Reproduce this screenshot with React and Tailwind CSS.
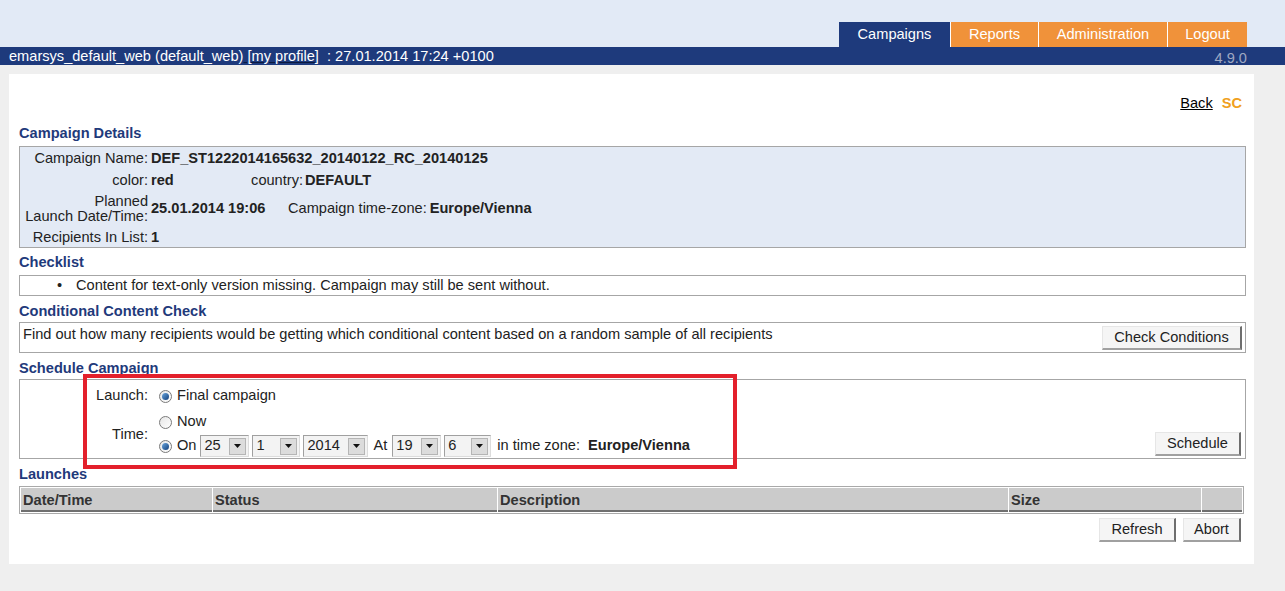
import React from "react";

const font = "font-['Liberation_Sans',Arial,Helvetica,sans-serif]";

const Radio = ({ checked }) => (
  <span className="flex h-[13px] w-[13px] items-center justify-center rounded-full border border-[#7a7a7a] bg-gradient-to-br from-[#e6e6e6] to-[#ffffff]">
    {checked && (
      <span className="h-[7px] w-[7px] rounded-full bg-gradient-to-br from-[#6aa7e0] to-[#123f7a]"></span>
    )}
  </span>
);

const Select = ({ value, width }) => (
  <div
    className={`flex h-[22px] items-center justify-between border border-[#a0a0a0] border-b-[#dcdcdc] border-r-[#dcdcdc] bg-[#f3f3f3] pl-[3px] pr-[2px] ${width}`}
  >
    <span>{value}</span>
    <span className="flex h-[17px] w-[17px] items-center justify-center border border-[#b5b5b5] bg-[#dcdcdc]">
      <svg width="7" height="4" viewBox="0 0 7 4">
        <path d="M0 0h7L3.5 4z" fill="#111" />
      </svg>
    </span>
  </div>
);

const Button = ({ children, className = "" }) => (
  <button
    className={`flex h-[24px] items-center justify-center border-l border-t border-l-[#e6e6e6] border-t-[#e6e6e6] border-r-2 border-b-2 border-r-[#6e6e6e] border-b-[#a0a0a0] bg-[#f5f5f5] pt-[1px] text-[14.6px] text-[#222] ${className}`}
  >
    {children}
  </button>
);

const Heading = ({ children, className = "" }) => (
  <div className={`h-[18px] text-[14.6px] font-bold leading-[18px] text-[#1f3a7b] ${className}`}>
    {children}
  </div>
);

export default function App() {
  return (
    <div className={`relative min-h-[591px] w-full bg-[#efefef] text-[14.6px] text-[#222] ${font}`}>
      {/* Top band with tabs */}
      <div className="flex h-[47px] items-end justify-end bg-[#e2eaf6] pr-[38px]">
        <div className="flex h-[25px] text-[14.6px] text-white">
          <div className="flex w-[111px] items-center justify-center bg-[#1e3a7c]">Campaigns</div>
          <div className="flex w-[88px] items-center justify-center border-l border-white bg-[#f0923a]">Reports</div>
          <div className="flex w-[129px] items-center justify-center border-l border-white bg-[#f0923a]">Administration</div>
          <div className="flex w-[80px] items-center justify-center border-l border-white bg-[#f0923a]">Logout</div>
        </div>
      </div>
      {/* Status bar */}
      <div className="flex h-[18px] items-center justify-between bg-[#1e3a7c] pl-[9px] pr-[38px] text-[14.6px] leading-[18px] text-white">
        <span className="whitespace-pre">
          emarsys_default_web (default_web)
          <span className="underline decoration-[#0b1a40]"> [my profile]</span>
          {"  : 27.01.2014 17:24 +0100"}
        </span>
        <span className="pt-[3px] text-[#9ea8c2]">4.9.0</span>
      </div>

      {/* Main panel */}
      <div className="ml-[9px] mt-[9px] w-[1245px] bg-white pb-[22px] pl-[10px] pr-[8px] pt-[20px]">
        <div className="flex h-[18px] items-center justify-end gap-[9px] pr-[4px] leading-[18px]">
          <span className="text-black underline">Back</span>
          <span className="font-bold text-[#f0a020]">SC</span>
        </div>

        <Heading className="mt-[12px]">Campaign Details</Heading>
        <div className="mt-[4px] h-[102px] border border-[#a6a6a6] bg-[#e3eaf5] pt-[1px]">
          <div className="flex h-[22px] items-center">
            <span className="w-[128px] text-right">Campaign Name:</span>
            <span className="ml-[3px] font-bold">DEF_ST1222014165632_20140122_RC_20140125</span>
          </div>
          <div className="flex h-[21px] items-center">
            <span className="w-[128px] text-right">color:</span>
            <span className="ml-[3px] w-[99px] font-bold">red</span>
            <span className="w-[53px] text-right">country:</span>
            <span className="ml-[2px] font-bold">DEFAULT</span>
          </div>
          <div className="flex h-[36px] items-center">
            <span className="w-[128px] text-right leading-[15px]">
              Planned
              <br />
              Launch Date/Time:
            </span>
            <span className="ml-[3px] w-[137px] font-bold">25.01.2014 19:06</span>
            <span>Campaign time-zone:</span>
            <span className="ml-[3px] font-bold">Europe/Vienna</span>
          </div>
          <div className="flex h-[21px] items-center">
            <span className="w-[128px] text-right">Recipients In List:</span>
            <span className="ml-[3px] font-bold">1</span>
          </div>
        </div>

        <Heading className="mt-[5px]">Checklist</Heading>
        <div className="mt-[4px] flex h-[21px] items-center border border-[#a6a6a6] pl-[37px] pt-[1px]">
          <span className="w-[19px]">•</span>
          <span>Content for text-only version missing. Campaign may still be sent without.</span>
        </div>

        <Heading className="mt-[6px]">Conditional Content Check</Heading>
        <div className="mt-[2px] flex h-[31px] items-start justify-between border border-[#a6a6a6] pl-[3px] pr-[3px]">
          <span className="mt-[2px] leading-[18px]">
            Find out how many recipients would be getting which conditional content based on a random sample of all recipients
          </span>
          <Button className="mt-[3px] w-[140px]">Check Conditions</Button>
        </div>

        <Heading className="mt-[6px]">Schedule Campaign</Heading>
        <div className="mt-[2px] flex h-[80px] items-end justify-between border border-[#a6a6a6] pb-[1px] pr-[4px]">
          <div className="flex h-full flex-col pt-[6px]">
            <div className="flex h-[20px] items-center">
              <span className="w-[128px] text-right">Launch:</span>
              <span className="ml-[11px]">
                <Radio checked />
              </span>
              <span className="ml-[5px]">Final campaign</span>
            </div>
            <div className="mt-[6px] flex items-center">
              <span className="w-[128px] text-right">Time:</span>
              <div className="ml-[11px] flex flex-col">
                <div className="flex h-[20px] items-center">
                  <Radio />
                  <span className="ml-[5px]">Now</span>
                </div>
                <div className="mt-[3px] flex h-[22px] items-center">
                  <Radio checked />
                  <span className="ml-[5px] mr-[4px]">On</span>
                  <Select value="25" width="w-[49px]" />
                  <span className="w-[3px]"></span>
                  <Select value="1" width="w-[48px]" />
                  <span className="w-[3px]"></span>
                  <Select value="2014" width="w-[65px]" />
                  <span className="mx-[5px]">At</span>
                  <Select value="19" width="w-[49px]" />
                  <span className="w-[3px]"></span>
                  <Select value="6" width="w-[47px]" />
                  <span className="ml-[6px]">in time zone:</span>
                  <span className="ml-[8px] font-bold">Europe/Vienna</span>
                </div>
              </div>
            </div>
          </div>
          <Button className="mb-[1px] w-[86px]">Schedule</Button>
        </div>

        <Heading className="mt-[6px]">Launches</Heading>
        <div className="mt-[3px] h-[28px] w-[1225px] border border-[#a9a9a9] bg-white p-[1px]">
          <div className="flex h-full gap-[1px] text-[14.6px] font-bold text-[#333]">
            <div className="flex w-[191px] items-center border-b-2 border-[#6f6f6f] bg-[#cbcbcb] pl-[2px] pt-[4px]">Date/Time</div>
            <div className="flex w-[284px] items-center border-b-2 border-[#6f6f6f] bg-[#cbcbcb] pl-[2px] pt-[4px]">Status</div>
            <div className="flex w-[510px] items-center border-b-2 border-[#6f6f6f] bg-[#cbcbcb] pl-[2px] pt-[4px]">Description</div>
            <div className="flex w-[192px] items-center border-b-2 border-[#6f6f6f] bg-[#cbcbcb] pl-[2px] pt-[4px]">Size</div>
            <div className="flex flex-1 items-center border-b-2 border-[#6f6f6f] bg-[#cbcbcb]"></div>
          </div>
        </div>
        <div className="mt-[4px] flex justify-end gap-[7px] pr-[5px]">
          <Button className="w-[77px]">Refresh</Button>
          <Button className="w-[58px]">Abort</Button>
        </div>
      </div>

      {/* Red annotation frame */}
      <div className="pointer-events-none absolute left-[83px] top-[374px] h-[95px] w-[654px] border-4 border-[#e3202b]"></div>
    </div>
  );
}
